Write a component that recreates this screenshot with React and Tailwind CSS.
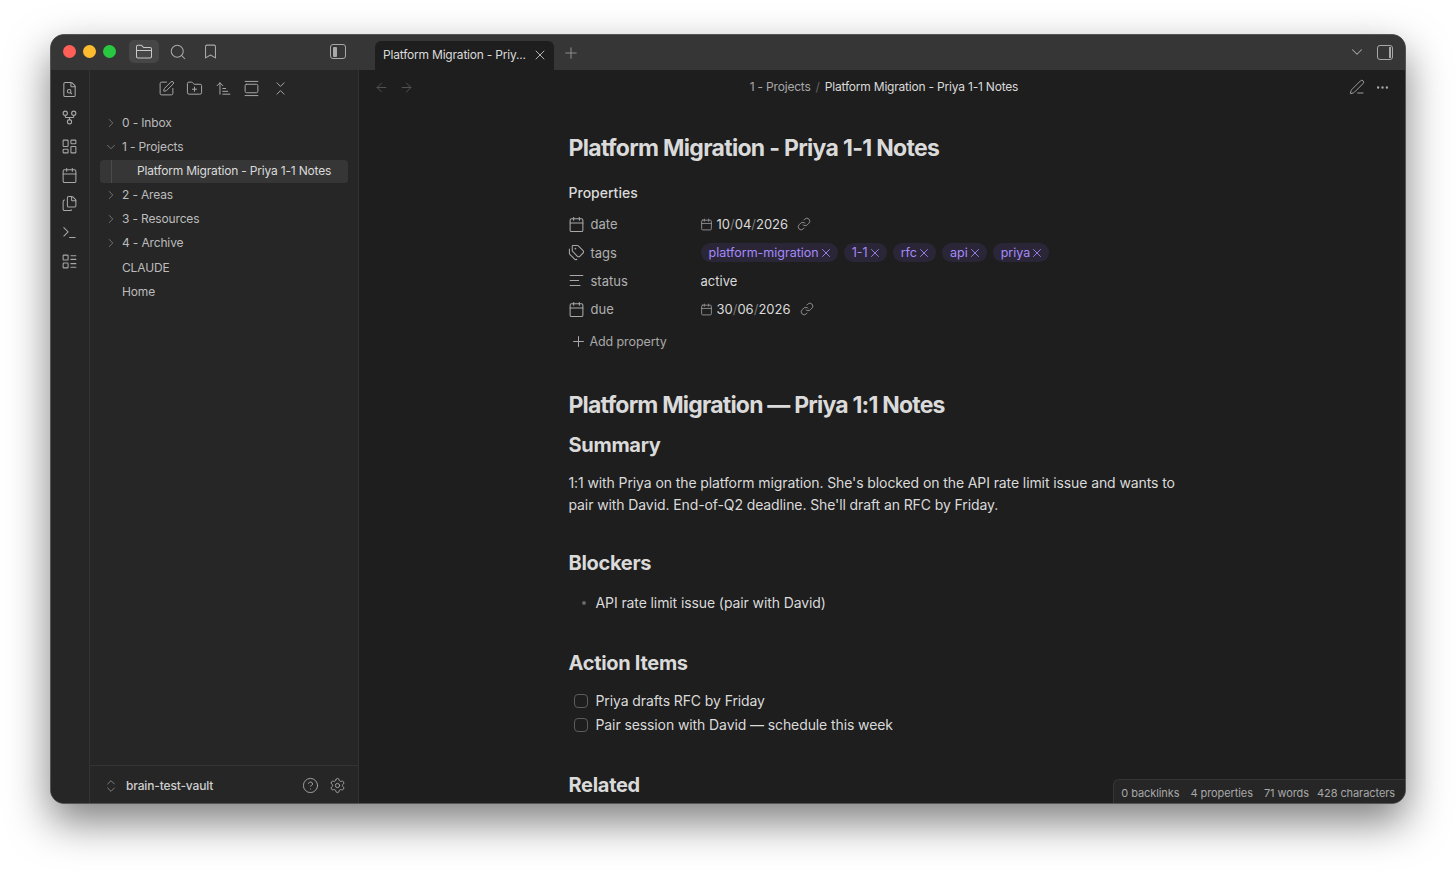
import React from "react";
import {
  FolderClosed, Search, Bookmark, X, Plus, ChevronDown, ChevronRight, ArrowLeft, ArrowRight,
  FileSearch, GitFork, LayoutDashboard, Calendar, Files, Terminal, LayoutList,
  SquarePen, FolderPlus, ArrowUpNarrowWide, GalleryVertical, ChevronsDownUp,
  PenLine, Ellipsis, Link, Tags, AlignLeft, ChevronsUpDown, CircleHelp, Settings,
} from "lucide-react";

const ribbonIcons = [FileSearch, GitFork, LayoutDashboard, Calendar, Files, Terminal, LayoutList];
const toolIcons = [SquarePen, FolderPlus, ArrowUpNarrowWide, GalleryVertical, ChevronsDownUp];
const tagNames = ["platform-migration", "1-1", "rfc", "api", "priya"];

function TreeRow({ label, open, folder }) {
  const Chevron = open ? ChevronDown : ChevronRight;
  return (
    <div className="flex h-[24.1px] items-center pl-[14px] text-[12px] tracking-[-0.15px] text-[#bcbcbc]">
      <span className="flex w-[18px] items-center">
        {folder && <Chevron className="h-[14px] w-[14px] text-[#777]" strokeWidth={1.6} />}
      </span>
      {label}
    </div>
  );
}

function PropRow({ icon: Icon, name, children }) {
  return (
    <div className="flex h-[28.4px] items-center">
      <Icon className="-ml-px h-[17px] w-[17px] text-[#a8a8a8]" strokeWidth={1.5} />
      <span className="ml-[6px] w-[110px] text-[13px] text-[#b0b0b0]">{name}</span>
      <div className="flex items-center text-[13px] text-[#dadada]">{children}</div>
    </div>
  );
}

function DateValue({ value }) {
  const parts = value.split("/");
  return (
    <>
      <Calendar className="-ml-px h-[13px] w-[13px] text-[#999]" strokeWidth={1.6} />
      <span className="ml-[4px] text-[13px] text-[#dadada]">
        {parts[0]}<span className="text-[#777]">/</span>{parts[1]}<span className="text-[#777]">/</span>{parts[2]}
      </span>
      <Link className="ml-[9px] h-[14px] w-[14px] text-[#999]" strokeWidth={1.5} />
    </>
  );
}

function Tag({ name }) {
  return (
    <span className="flex h-[19px] items-center rounded-full bg-[#2a2638] pl-[8px] pr-[5px] text-[12.5px] text-[#a68af9]">
      {name}
      <X className="h-[14px] w-[14px]" strokeWidth={1.5} />
    </span>
  );
}

function Heading2({ children, className }) {
  return <h2 className={`text-[20px] font-bold leading-[28px] tracking-[-0.3px] text-[#dadada] ${className}`}>{children}</h2>;
}

function Task({ children }) {
  return (
    <div className="flex h-[23.5px] items-center">
      <span className="ml-[5px] h-[14px] w-[14px] rounded-[4px] border border-[#5c5c5c]" />
      <span className="ml-[8px]">{children}</span>
    </div>
  );
}

export default function App() {
  return (
    <div className="h-[871px] overflow-hidden bg-white pl-[50px] pt-[34px] font-['Inter',sans-serif]">
      <div className="relative flex h-[770px] w-[1356px] flex-col overflow-hidden rounded-[14px] border border-[#555] bg-[#1e1e1e] shadow-[0_18px_42px_rgba(0,0,0,0.5)]">
        {/* title bar */}
        <div className="flex h-[35px] shrink-0 bg-[#363636]">
          <div className="flex w-[324px] items-center pb-[2px]">
            <span className="ml-[12px] h-[13px] w-[13px] rounded-full bg-[#ff5f57]" />
            <span className="ml-[7px] h-[13px] w-[13px] rounded-full bg-[#febc2e]" />
            <span className="ml-[7px] h-[13px] w-[13px] rounded-full bg-[#28c840]" />
            <span className="ml-[13px] flex h-[23px] w-[30px] items-center justify-center rounded-[5px] bg-[#464646]">
              <FolderClosed className="h-[18px] w-[18px] text-[#c8c8c8]" strokeWidth={1.4} />
            </span>
            <Search className="ml-[10px] h-[18px] w-[18px] text-[#a8a8a8]" strokeWidth={1.4} />
            <Bookmark className="ml-[15px] h-[17px] w-[17px] text-[#a8a8a8]" strokeWidth={1.5} />
            <span className="ml-[111px] flex h-[15px] w-[16px] rounded-[3px] border-[1.5px] border-[#a8a8a8] p-[1.5px]">
              <span className="w-[4px] rounded-[1px] bg-[#a8a8a8]" />
            </span>
          </div>
          <div className="mt-[6px] flex h-[29px] w-[179px] items-center whitespace-nowrap rounded-t-[6px] bg-[#1e1e1e] pb-[1px] pl-[8px] text-[12px] tracking-[-0.2px] text-[#dadada]">
            <span className="w-[149px]">Platform Migration - Priy...</span>
            <X className="h-[16px] w-[16px] text-[#c0c0c0]" strokeWidth={1.4} />
          </div>
          <Plus className="ml-[8px] mt-[9px] h-[18px] w-[18px] text-[#8c8c8c]" strokeWidth={1.4} />
          <div className="ml-auto flex items-center pb-[1px] pr-[12px]">
            <ChevronDown className="h-[18px] w-[18px] text-[#a8a8a8]" strokeWidth={1.4} />
            <span className="ml-[11px] flex h-[15px] w-[16px] justify-end rounded-[3px] border-[1.5px] border-[#a8a8a8] p-[1px]">
              <span className="w-[2px] bg-[#a8a8a8]" />
            </span>
          </div>
        </div>

        <div className="flex min-h-0 flex-1">
          {/* ribbon */}
          <div className="flex w-[39px] shrink-0 flex-col items-center gap-[11.7px] border-r border-[#333] bg-[#262626] pr-[1px] pt-[10.5px]">
            {ribbonIcons.map((Icon, i) => (
              <Icon key={i} className="h-[17px] w-[17px] text-[#a8a8a8]" strokeWidth={1.5} />
            ))}
          </div>

          {/* file explorer */}
          <div className="flex w-[269px] shrink-0 flex-col border-r border-[#333] bg-[#262626]">
            <div className="flex h-[37px] items-center justify-center gap-[11.5px] pr-[2px]">
              {toolIcons.map((Icon, i) => (
                <Icon key={i} className="h-[17px] w-[17px] text-[#a8a8a8]" strokeWidth={1.4} />
              ))}
            </div>
            <div className="pt-[4px]">
              <TreeRow label="0 - Inbox" folder />
              <TreeRow label="1 - Projects" folder open />
              <div className="flex h-[24px] items-center">
                <div className="relative mx-[10px] flex h-[23px] flex-1 items-center rounded-[4px] bg-[#363636] pl-[37px] text-[12px] tracking-[-0.18px] text-[#dadada]">
                  <span className="absolute bottom-0 left-[11px] top-0 w-px bg-[#4a4a4a]" />
                  Platform Migration - Priya 1-1 Notes
                </div>
              </div>
              <TreeRow label="2 - Areas" folder />
              <TreeRow label="3 - Resources" folder />
              <TreeRow label="4 - Archive" folder />
              <TreeRow label="CLAUDE" />
              <TreeRow label="Home" />
            </div>
            <div className="mt-auto flex h-[38px] items-center border-t border-[#333] pl-[13px] pr-[12px] pt-[2px]">
              <ChevronsUpDown className="h-[16px] w-[16px] text-[#8c8c8c]" strokeWidth={1.3} />
              <span className="ml-[7px] text-[12px] font-medium tracking-[-0.15px] text-[#cfcfcf]">brain-test-vault</span>
              <CircleHelp className="ml-auto h-[17px] w-[17px] text-[#a8a8a8]" strokeWidth={1.3} />
              <Settings className="ml-[10px] h-[17px] w-[17px] text-[#a8a8a8]" strokeWidth={1.3} />
            </div>
          </div>

          {/* note */}
          <div className="relative min-w-0 flex-1 overflow-hidden">
            <div className="flex h-[34px] items-center pl-[15px] pr-[15px]">
              <ArrowLeft className="h-[15px] w-[15px] text-[#555]" strokeWidth={1.5} />
              <ArrowRight className="ml-[10px] h-[15px] w-[15px] text-[#555]" strokeWidth={1.5} />
              <div className="flex flex-1 items-center justify-center pl-[5px] text-[12px] tracking-[-0.2px]">
                <span className="text-[#a8a8a8]">1 - Projects</span>
                <span className="mx-[5px] text-[#666]">/</span>
                <span className="text-[#dadada]">Platform Migration - Priya 1-1 Notes</span>
              </div>
              <PenLine className="h-[16px] w-[16px] text-[#a8a8a8]" strokeWidth={1.4} />
              <Ellipsis className="ml-[10px] h-[15px] w-[15px] text-[#a8a8a8]" strokeWidth={1.8} />
            </div>

            <div className="ml-[209.5px] w-[620px] text-[14px] leading-[22px] tracking-[-0.1px] text-[#dadada]">
              <h1 className="mt-[28px] text-[23px] font-bold leading-[32px] tracking-[-0.7px] text-[#dadada]">
                Platform Migration - Priya 1-1 Notes
              </h1>
              <div className="mt-[19px] text-[14px] font-medium leading-[20px] tracking-normal">Properties</div>
              <div className="mt-[7px] tracking-normal">
                <PropRow icon={Calendar} name="date"><DateValue value="10/04/2026" /></PropRow>
                <PropRow icon={Tags} name="tags">
                  <div className="flex gap-[6px]">
                    {tagNames.map((t) => <Tag key={t} name={t} />)}
                  </div>
                </PropRow>
                <PropRow icon={AlignLeft} name="status">active</PropRow>
                <PropRow icon={Calendar} name="due"><DateValue value="30/06/2026" /></PropRow>
              </div>
              <div className="mt-[7px] flex h-[22px] items-center pl-[1px] text-[12.5px] text-[#a8a8a8]">
                <Plus className="h-[17px] w-[17px]" strokeWidth={1.4} />
                <span className="ml-[3px]">Add property</span>
              </div>

              <h1 className="mt-[36px] text-[23px] font-bold leading-[32px] tracking-[-0.8px]">
                Platform Migration — Priya 1:1 Notes
              </h1>
              <Heading2 className="mt-[10px]">Summary</Heading2>
              <p className="mt-[13px]">
                1:1 with Priya on the platform migration. She's blocked on the API rate limit issue and wants to pair with David. End-of-Q2 deadline. She'll draft an RFC by Friday.
              </p>
              <Heading2 className="mt-[33px]">Blockers</Heading2>
              <div className="mt-[15px] flex h-[22px] items-center">
                <span className="ml-[13px] h-[4px] w-[4px] rounded-full bg-[#666]" />
                <span className="ml-[10px]">API rate limit issue (pair with David)</span>
              </div>
              <Heading2 className="mt-[35px]">Action Items</Heading2>
              <div className="mt-[13px]">
                <Task>Priya drafts RFC by Friday</Task>
                <Task>Pair session with David — schedule this week</Task>
              </div>
              <Heading2 className="mt-[34px]">Related</Heading2>
            </div>

            <div className="absolute bottom-0 right-0 flex h-[24px] items-center gap-[11px] rounded-tl-[6px] border-l border-t border-[#363636] bg-[#262626] pl-[7px] pr-[10px] pt-[3px] text-[11px] tracking-[-0.08px] text-[#a8a8a8]">
              <span>0 backlinks</span>
              <span>4 properties</span>
              <span>71 words</span>
              <span className="-ml-[3px]">428 characters</span>
            </div>
          </div>
        </div>
      </div>
    </div>
  );
}
